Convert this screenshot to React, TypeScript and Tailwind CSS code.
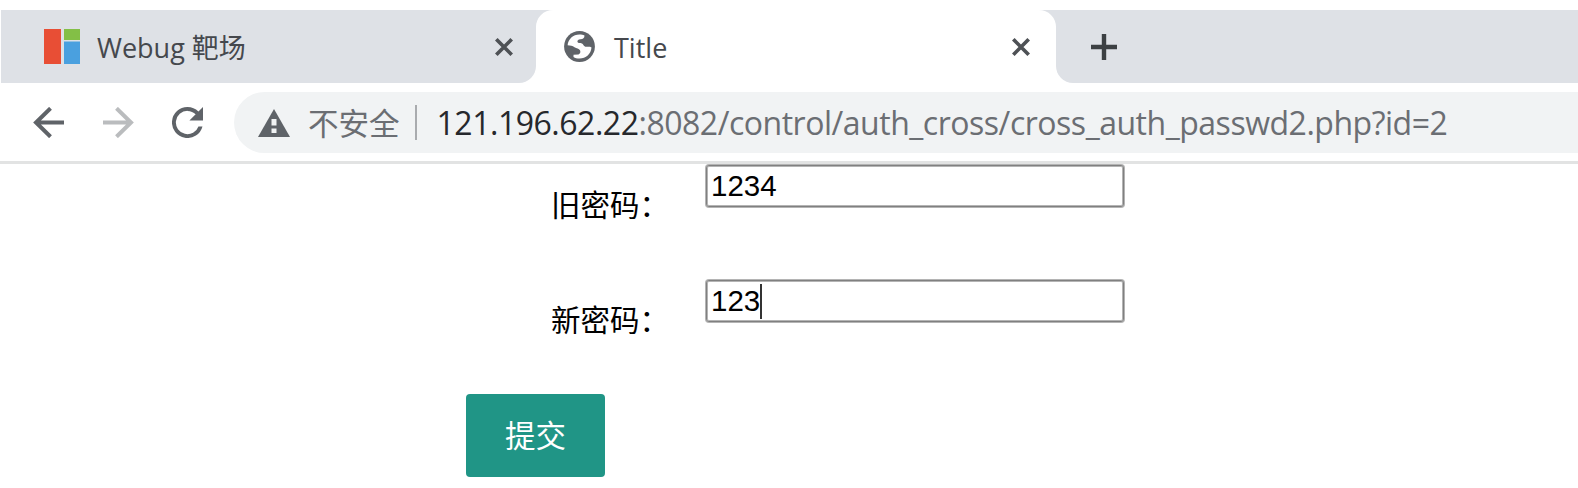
import type { ReactNode } from "react";

const ui = "font-['Open_Sans','Noto_Sans_CJK_SC',sans-serif]";

function Close() {
  return (
    <svg className="block h-[18px] w-[18px] shrink-0" viewBox="0 0 18 18" fill="none" stroke="#4e5155" strokeWidth="3.7">
      <path d="M1.300 1.300L16.700 16.700M16.700 1.300L1.300 16.700" />
    </svg>
  );
}

function Globe() {
  return (
    <svg className="block h-[31px] w-[31px] shrink-0" viewBox="0 0 31 31">
      <circle cx="15.5" cy="15.5" r="15.4" fill="#5f6368" />
      <path
        fill="#fff"
        d="M20.500 4.400C20.500 7 19 8 16.500 8.200C14 8.500 13.200 9.500 13.500 11C14 12.200 16 11.700 18 12.500C19.500 13.200 19.500 15.200 21.300 15.700C23.500 16.200 25.500 15.300 27.500 16.500C27 23 22 27.500 15.500 27.600C13 27.600 11 27 9.500 26L9.500 23.700L14.500 23.500C16.800 22.500 16.500 20.500 16 19.300C15 17.300 12.500 17.800 10.500 16.300C8.500 14.800 6.500 14.500 3.600 14.300C4.200 8 9 3.400 15.500 3.400C17.500 3.400 19 3.800 20.500 4.400Z"
      />
    </svg>
  );
}

function TabStrip() {
  return (
    <div className="ml-px mt-[10px] flex h-[73px] bg-white">
      <div className="flex h-full w-[535px] items-center rounded-br-[17px] bg-[#dee1e6] pl-[43px]">
        <svg className="block h-[35px] w-[36px] shrink-0" viewBox="0 0 36 35">
          <path fill="#e84e35" d="M0 0H17V35H0z" />
          <path fill="#83bf46" d="M20 0H36V11H20z" />
          <path fill="#4aa0df" d="M20 12.500H36V35H20z" />
        </svg>
        <span className="ml-[17px] mt-[2px] w-[398px] whitespace-nowrap text-[27px] leading-[36px] text-[#45484d]">Webug 靶场</span>
        <Close />
      </div>
      <div className="-mr-4 h-full w-4 shrink-0" />
      <div className="flex h-full w-[520px] shrink-0 bg-[#dee1e6]">
        <div className="flex h-full w-full items-center rounded-t-[17px] bg-white pl-[28px]">
          <Globe />
          <span className="ml-[19px] mt-[2px] w-[398px] whitespace-nowrap text-[27px] leading-[36px] text-[#45484d]">Title</span>
          <Close />
        </div>
      </div>
      <div className="flex h-full grow items-center rounded-bl-[17px] bg-[#dee1e6] pl-[35px]">
        <svg className="block h-[26px] w-[26px]" viewBox="0 0 26 26" fill="none" stroke="#3c4043" strokeWidth="4.4">
          <path d="M13 0V26M0 13H26" />
        </svg>
      </div>
    </div>
  );
}

function Toolbar() {
  return (
    <div className="flex h-[81px] items-start border-b-[3px] border-[#e2e3e3] pl-[33px] pt-[9px]">
      <div className="flex h-[61px] w-[201px] shrink-0 items-center">
        <svg className="block h-[31px] w-[31px]" viewBox="0 0 31 31" fill="none" stroke="#5f6368" strokeWidth="4">
          <path d="M31 15.500H3M17.500 1.300L3 15.500L17.500 29.700" />
        </svg>
        <svg className="ml-[39px] block h-[31px] w-[31px]" viewBox="0 0 31 31" fill="none" stroke="#babcbe" strokeWidth="4">
          <path d="M0 15.500H28M13.500 1.300L28 15.500L13.500 29.700" />
        </svg>
        <svg className="ml-[38px] block h-[31px] w-[31px]" viewBox="4 4 16 16" fill="#5f6368">
          <path d="M17.650 6.350A7.958 7.958 0 0 0 12 4a8 8 0 1 0 7.730 10h-2.080A6 6 0 1 1 12 6c1.660 0 3.140.690 4.220 1.780L13 11h7V4z" />
        </svg>
      </div>
      <div className="flex h-[61px] grow items-center rounded-l-full bg-[#f1f3f4] pl-[24px]">
        <svg className="block h-[28px] w-[32px] shrink-0" viewBox="0 0 32 28">
          <path fill="#5f6368" d="M16 0L32 28H0z" />
          <path fill="#f1f3f4" d="M13.500 10H18.500V16.500H13.500zM13.500 19.500H18.500V24H13.500z" />
        </svg>
        <span className="ml-[18px] whitespace-nowrap text-[30.5px] leading-[40px] text-[#6b6e73]">不安全</span>
        <div className="ml-[15px] h-[35px] w-[2px] bg-[#a9abae]" />
        <div className="ml-[20px] whitespace-nowrap text-[32px] leading-[40px] tracking-[-0.48px] text-[#6b6e73]">
          <span className="text-[#26282c]">121.196.62.22</span>
          <span>:8082/control/auth_cross/cross_auth_passwd2.php?id=2</span>
        </div>
      </div>
    </div>
  );
}

function Field({ label, children }: { label: string; children: ReactNode }) {
  return (
    <div className="flex h-[115px] items-start pl-[551px]">
      <span className="mt-[20px] w-[155px] shrink-0 whitespace-nowrap text-[29.500px] leading-[42px] text-black">{label}</span>
      <div className="mt-px flex h-[42px] w-[418px] items-center rounded-[3px] border border-[#808080] bg-white pl-[4px] font-['Liberation_Sans',sans-serif] text-[29.500px] leading-[36px] text-black shadow-[0_0_0_1px_#b4b4b4,inset_0_0_0_1px_#b4b4b4]">
        {children}
      </div>
    </div>
  );
}

export default function App() {
  return (
    <div className={`flex h-[488px] w-[1578px] flex-col overflow-hidden bg-white ${ui}`}>
      <TabStrip />
      <Toolbar />
      <div className="flex flex-col">
        <Field label="旧密码：">1234</Field>
        <Field label="新密码：">
          123
          <span className="h-[35px] w-[2px] bg-[#333]" />
        </Field>
        <button className="ml-[466px] flex h-[83px] w-[139px] items-center justify-center rounded-[4px] bg-[#209586] text-[30.5px] text-white">提交</button>
      </div>
    </div>
  );
}
